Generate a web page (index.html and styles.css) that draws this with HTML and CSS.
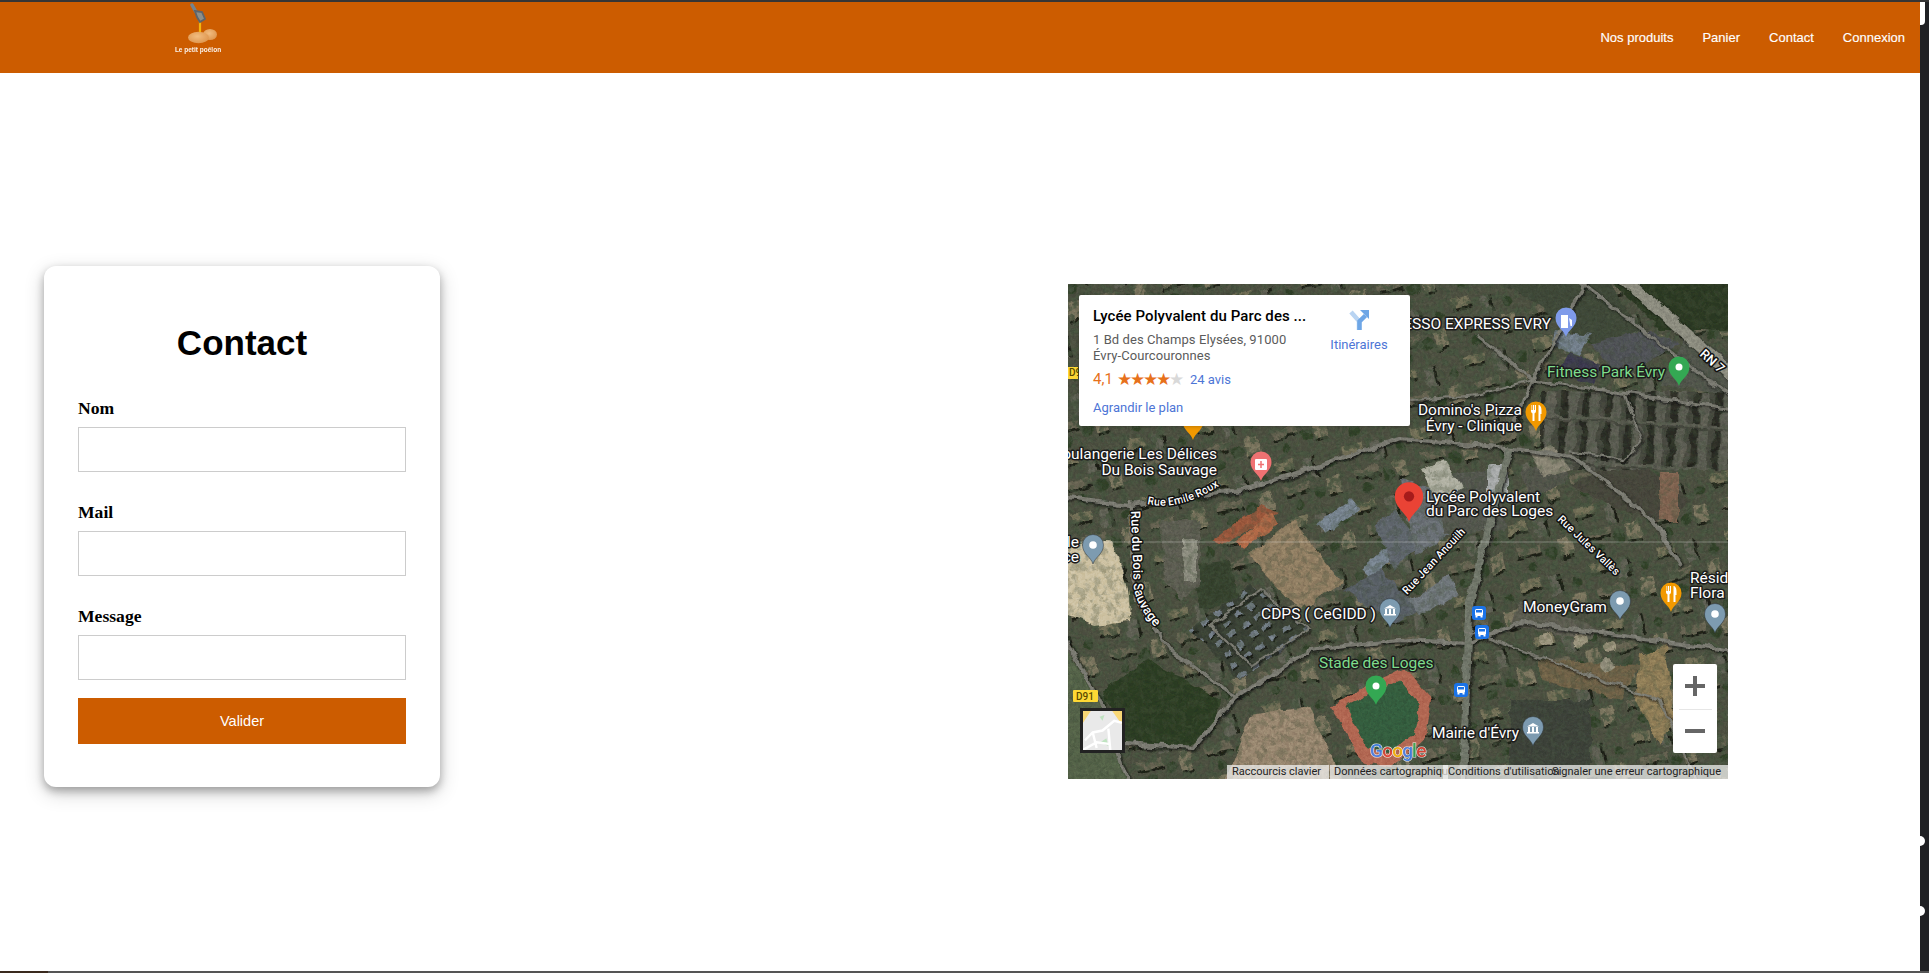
FILE: index.html
```html
<!DOCTYPE html>
<html lang="fr">
<head>
<meta charset="utf-8">
<title>Contact - Le petit poêlon</title>
<link rel="stylesheet" href="styles.css">
</head>
<body>
<div class="shell">
  <div class="page">
    <header class="nav">
      <a class="logo" href="#">
        <svg class="logo-art" viewBox="0 0 60 42" aria-hidden="true">
          <defs>
            <radialGradient id="spud" cx=".45" cy=".4" r=".7">
              <stop offset="0" stop-color="#f2bd80"/>
              <stop offset="1" stop-color="#dc9148"/>
            </radialGradient>
          </defs>
          <ellipse cx="42" cy="32.500" rx="7" ry="5.500" fill="url(#spud)"/>
          <ellipse cx="30.500" cy="35.500" rx="10.500" ry="5.800" fill="url(#spud)"/>
          <path d="M32 18 L32 30" stroke="#f5b50f" stroke-width="2.200" fill="none"/>
          <path d="M24 3 L28 10" stroke="#74838f" stroke-width="3.500" stroke-linecap="round"/>
          <path d="M27 9 L34 10 L37 17 L32 20 L29 15 Z" fill="#8d8f8a" stroke="#5e6469" stroke-width="1.800"/>
        </svg>
        <span class="logo-name">Le petit poêlon</span>
      </a>
      <nav class="nav-links">
        <a href="#">Nos produits</a>
        <a href="#">Panier</a>
        <a href="#">Contact</a>
        <a href="#">Connexion</a>
      </nav>
    </header>

    <main class="content">
      <form class="card">
        <h1>Contact</h1>
        <label class="field"><b>Nom</b><input type="text"></label>
        <label class="field"><b>Mail</b><input type="text"></label>
        <label class="field"><b>Message</b><input type="text"></label>
        <button type="button">Valider</button>
      </form>

      <section class="map">
        <svg class="terrain" viewBox="1068 284 660 495" aria-hidden="true">
          <defs>
            <filter id="noise" x="0" y="0" width="100%" height="100%">
              <feTurbulence type="fractalNoise" baseFrequency=".35" numOctaves="3" seed="8"/>
              <feColorMatrix values="0 0 0 0 .5  0 0 0 0 .5  0 0 0 0 .5  1.600 0 0 0 -.35"/>
            </filter>
            <filter id="grain" x="0" y="0" width="100%" height="100%">
              <feTurbulence type="fractalNoise" baseFrequency=".14" numOctaves="3" seed="3"/>
              <feColorMatrix values="0 0 0 0 .05  0 0 0 0 .07  0 0 0 0 .04  0 0 0 5 -2.200"/>
            </filter>
            <filter id="soft" x="0" y="0" width="100%" height="100%">
              <feTurbulence type="fractalNoise" baseFrequency=".07" numOctaves="3" seed="5" result="warp"/>
              <feDisplacementMap in="SourceGraphic" in2="warp" scale="8" xChannelSelector="R" yChannelSelector="G"/>
              <feGaussianBlur stdDeviation=".65"/>
            </filter>
            <filter id="edge" x="-5%" y="-5%" width="110%" height="110%">
              <feDropShadow dx="1.500" dy="1.500" stdDeviation=".8" flood-color="#0c0e09" flood-opacity=".9"/>
            </filter>
            <pattern id="suburb" width="70" height="58" patternUnits="userSpaceOnUse" patternTransform="rotate(-14)">
              <rect width="70" height="58" fill="#45483a"/>
              <rect x="4" y="4" width="20" height="10" fill="#68654f"/>
              <rect x="4" y="14" width="20" height="3" fill="#1b1d15"/>
              <rect x="32" y="6" width="10" height="20" fill="#56574c"/>
              <rect x="42" y="6" width="3" height="20" fill="#1b1d15"/>
              <rect x="50" y="30" width="14" height="18" fill="#6e6955"/>
              <rect x="50" y="48" width="14" height="3" fill="#1b1d15"/>
              <rect x="8" y="30" width="26" height="8" fill="#5d5a4a"/>
              <rect x="8" y="38" width="26" height="3" fill="#1b1d15"/>
              <circle cx="42" cy="42" r="6" fill="#2b3a24"/>
              <circle cx="60" cy="18" r="5" fill="#2b3a24"/>
              <circle cx="20" cy="50" r="5" fill="#2b3a24"/>
            </pattern>
            <pattern id="rows" width="22" height="44" patternUnits="userSpaceOnUse" patternTransform="rotate(4)">
              <rect width="22" height="44" fill="#3d3e37"/>
              <rect x="1" y="2" width="7" height="40" fill="#1f201b"/>
              <rect x="9" y="2" width="9" height="40" fill="#56564e"/>
              <rect x="0" y="41" width="22" height="3" fill="#55564d"/>
            </pattern>
            <pattern id="houses" width="16" height="13" patternUnits="userSpaceOnUse" patternTransform="rotate(-35)">
              <rect width="16" height="13" fill="#33392f"/>
              <rect x="2" y="2" width="8" height="5" fill="#68717a"/>
              <rect x="3" y="7" width="8" height="2" fill="#171a14"/>
            </pattern>
            <path id="pin" d="M0 0C-2-7-10.500-10-10.500-19A10.500 10.500 0 1 1 10.500-19C10.500-10 2-7 0 0Z"/>
            <g id="bus">
              <rect x="-7" y="-7" width="14" height="14" rx="3" fill="#1a73e8"/>
              <rect x="-4" y="-4" width="8" height="7" rx="1.500" fill="#fff"/>
              <rect x="-3" y="-3" width="6" height="2.500" fill="#1a73e8"/>
              <rect x="-3.500" y="3" width="2" height="1.500" fill="#fff"/>
              <rect x="1.500" y="3" width="2" height="1.500" fill="#fff"/>
            </g>
            <g id="temple" fill="#fff">
              <path d="M-6-19.500L0-23L6-19.500Z"/>
              <rect x="-5" y="-19" width="2" height="5"/>
              <rect x="-1" y="-19" width="2" height="5"/>
              <rect x="3" y="-19" width="2" height="5"/>
              <rect x="-6" y="-14" width="12" height="1.500"/>
            </g>
            <g id="fork" fill="#fff">
              <path d="M-5-26v6c0 1.500 1 2 1.500 2.500V-10h2v-7.500c.5-.5 1.500-1 1.500-2.500v-6h-1v5h-.8v-5h-1.400v5H-4.500v-5Z"/>
              <path d="M2.500-26c2 0 3 2.500 3 6v3h-1v7h-2Z"/>
            </g>
            <path id="roadJean" d="M1407 595L1466 532"/>
            <path id="roadJules" d="M1557 520L1620 580"/>
            <path id="roadEmile" d="M1147 504Q1180 512 1222 484"/>
            <path id="roadBois" d="M1131 511L1134 590Q1140 615 1168 640"/>
          </defs>

          <g filter="url(#soft)">
            <rect x="1048" y="264" width="700" height="535" fill="url(#suburb)"/>
            <rect x="1048" y="264" width="700" height="535" filter="url(#grain)" opacity=".7"/>

            <!-- ground patches -->
            <path d="M1060 548L1110 540Q1135 590 1128 622L1095 626L1060 612Z" fill="#c8bb98"/>
            <path d="M1247 555L1293 520L1343 583L1300 610Z" fill="#85735a"/>
            <path d="M1222 790L1250 715L1310 705L1345 790Z" fill="#8e7b66"/>
            <path d="M1103 690L1150 660L1220 700L1215 730L1190 745L1125 745Z" fill="#27361f"/>
            <path d="M1640 655L1665 645L1675 720L1660 745L1635 700Z" fill="#857350"/>
            <path d="M1540 660L1640 665L1620 700L1540 680Z" fill="#665941"/>
            <path d="M1510 700L1590 700L1590 770L1510 770Z" fill="#363b33"/>
            <path d="M1060 640L1100 700L1130 790L1060 790Z" fill="#4d5a42"/>
            <path d="M1480 270L1600 270L1640 330L1600 350L1530 300Z" fill="#384032"/>
            <path d="M1600 270L1740 270L1740 330L1660 330Z" fill="#27331f"/>
            <path d="M1190 565L1230 560L1240 600L1200 610Z" fill="#2f3a28"/>

            <!-- built areas -->
            <rect x="1540" y="392" width="200" height="78" fill="url(#rows)" opacity=".85"/>
            <path d="M1190 630L1250 585L1310 630L1240 680Z" fill="url(#houses)"/>
            <path d="M1160 520L1200 520L1200 585L1180 600L1165 580Z" fill="#55554b"/>
            <path d="M1183 540h14v42h-14z" fill="#7e7e72"/>
            <path d="M1212 540L1262 505L1278 512L1222 545Z" fill="#8e4f36"/>
            <path d="M1236 540L1272 512L1278 525L1242 550Z" fill="#a85f40"/>
            <path d="M1316 524L1350 498L1360 510L1326 534Z" fill="#6c7782"/>
            <path d="M1362 568L1388 545L1398 555L1372 578Z" fill="#6c7782"/>
            <path d="M1376 525L1395 510L1420 545L1395 570Z" fill="#565c62"/>
            <path d="M1400 480L1440 490L1460 530L1415 555Z" fill="#60656a"/>
            <path d="M1345 590L1380 570L1420 610L1395 625Z" fill="#50565c"/>
            <path d="M1430 475L1500 470L1505 530L1445 535Z" fill="#4c4e47"/>
            <path d="M1420 470L1445 460L1462 488L1436 500Z" fill="#a8a898"/>
            <path d="M1488 465h20v28h-20z" fill="#9da0a0"/>
            <path d="M1520 470L1560 462L1570 480L1530 500Z" fill="#4b4c44"/>
            <path d="M1570 485L1620 510L1660 520L1690 500L1650 470L1600 470Z" fill="#3f3e35"/>
            <rect x="1660" y="472" width="18" height="48" fill="#745a49"/>
            <path d="M1520 600L1600 630L1590 640L1510 625Z" fill="#55544a"/>
            <path d="M1408 600L1450 575L1460 595L1420 615Z" fill="#666c70"/>
            <circle cx="1546" cy="640" r="7" fill="#928a74"/><circle cx="1580" cy="640" r="7" fill="#928a74"/>
            <circle cx="1610" cy="646" r="6" fill="#928a74"/><circle cx="1607" cy="665" r="7" fill="#84806f"/>
            <path d="M1530 452L1552 445L1570 470L1545 478Z" fill="#7c7869"/>
            <path d="M1555 330L1590 335L1580 355L1550 345Z" fill="#68737e"/>
            <path d="M1590 345L1650 330L1680 345L1620 375Z" fill="#484a4e"/>
            <path d="M1570 352L1600 365L1595 385L1560 370Z" fill="#353346"/>
            <path d="M1690 330L1740 370L1740 395L1660 385Z" fill="#4a4d45"/>

            <rect x="1048" y="264" width="700" height="535" filter="url(#grain)" opacity=".3"/>

            <!-- stadium -->
            <path d="M1330 705L1405 668L1432 700L1425 738L1390 768L1362 762Z" fill="#a85d4a"/>
            <path d="M1345 706L1400 680L1420 705L1415 735L1385 755L1368 748Z" fill="#2f5438"/>

            <!-- roads -->
            <g class="roads" filter="url(#edge)">
              <path class="r4" d="M1125 743L1193 748L1237 697L1310 650L1400 640L1470 643L1520 622L1740 652"/>
              <path class="r4" d="M1060 496L1130 505L1240 490L1300 472L1400 438L1507 448L1573 457L1653 520L1680 565"/>
              <path class="r6" d="M1510 448L1490 520L1470 600L1462 790"/>
              <path class="r3" d="M1477 337L1533 380L1740 410"/>
              <path class="r3" d="M1590 275L1533 380L1515 420"/>
              <path class="r3" d="M1130 500L1135 600L1170 650L1237 697"/>
              <path class="r4" d="M1060 630L1100 700L1130 790"/>
              <path class="r2" d="M1410 400L1480 395L1533 380"/>
              <path class="r2" d="M1465 630L1660 700L1700 790"/>
              <path class="r2" d="M1210 625L1260 590L1310 630L1250 665Z"/>
              <path class="r2" d="M1625 395L1640 440L1625 460L1570 450"/>
              <path class="r8" d="M1620 275L1740 382"/>
              <path class="r3" d="M1580 282L1740 404"/>
            </g>
            <rect class="overlay" x="1048" y="264" width="700" height="535" filter="url(#noise)" opacity=".5"/>
          </g>
          <line x1="1068" y1="542" x2="1728" y2="542" stroke="#fff" stroke-opacity=".3"/>

          <!-- road names -->
          <text class="road-name"><textPath href="#roadEmile">Rue Emile Roux</textPath></text>
          <text class="road-name big"><textPath href="#roadBois">Rue du Bois Sauvage</textPath></text>
          <text class="road-name"><textPath href="#roadJean">Rue Jean Anouilh</textPath></text>
          <text class="road-name"><textPath href="#roadJules">Rue Jules Vallès</textPath></text>
          <text class="road-name big" transform="translate(1699 355) rotate(42)" x="0" y="0">RN 7</text>

          <!-- places -->
          <text class="place end" x="1551" y="329">ESSO EXPRESS EVRY</text>
          <text class="place green end" x="1665" y="377">Fitness Park Évry</text>
          <text class="place end" x="1522" y="415">Domino's Pizza</text>
          <text class="place end" x="1522" y="431">Évry - Clinique</text>
          <text class="place" x="1426" y="502">Lycée Polyvalent</text>
          <text class="place" x="1426" y="516">du Parc des Loges</text>
          <text class="place end" x="1217" y="459">oulangerie Les Délices</text>
          <text class="place end" x="1217" y="475">Du Bois Sauvage</text>
          <text class="place end" x="1079" y="547">le</text>
          <text class="place end" x="1079" y="562">ce</text>
          <text class="place end" x="1376" y="619">CDPS ( CeGIDD )</text>
          <text class="place green" x="1319" y="668">Stade des Loges</text>
          <text class="place" x="1523" y="612">MoneyGram</text>
          <text class="place" x="1690" y="583">Résid</text>
          <text class="place" x="1690" y="598">Flora</text>
          <text class="place end" x="1519" y="738">Mairie d'Évry</text>

          <!-- pins -->
          <use href="#pin" class="pin-fuel" x="1566" y="337"/>
          <path d="M1561 315h7v13h-7zM1569 318l3 2v6h-1.500" fill="#fff"/>
          <use href="#pin" class="pin-green" x="1679" y="386"/>
          <circle cx="1679" cy="367" r="3.500" fill="#fff"/>
          <use href="#pin" class="pin-orange" x="1536" y="431"/>
          <use href="#fork" x="1536" y="431"/>
          <use href="#pin" class="pin-orange" x="1193" y="440"/>
          <use href="#pin" class="pin-orange" x="1671" y="612"/>
          <use href="#fork" x="1671" y="612"/>
          <use href="#pin" class="pin-rose" x="1261" y="481"/>
          <rect x="1255" y="459" width="12" height="11" rx="1" fill="#fff"/>
          <path d="M1261 461v7M1258 464.500h6" stroke="#ef7272" stroke-width="1.500"/>
          <use href="#pin" class="pin-gray" x="1093" y="564"/>
          <circle cx="1093" cy="545" r="3.800" fill="#fff"/>
          <use href="#pin" class="pin-gray" x="1390" y="628"/>
          <use href="#temple" x="1390" y="628"/>
          <use href="#pin" class="pin-green" x="1376" y="705"/>
          <circle cx="1376" cy="686" r="3.500" fill="#fff"/>
          <use href="#pin" class="pin-gray" x="1620" y="620"/>
          <circle cx="1620" cy="601" r="3.800" fill="#fff"/>
          <use href="#pin" class="pin-gray" x="1715" y="633"/>
          <circle cx="1715" cy="614" r="3.800" fill="#fff"/>
          <use href="#pin" class="pin-gray" x="1533" y="746"/>
          <use href="#temple" x="1533" y="746"/>
          <g transform="translate(1409 522) scale(1.350)">
            <use href="#pin" class="pin-red"/>
            <circle cy="-19" r="3.800" fill="#a61b1b"/>
          </g>
          <use href="#bus" x="1479" y="613"/>
          <use href="#bus" x="1482" y="632"/>
          <use href="#bus" x="1461" y="690"/>

          <!-- shields -->
          <rect x="1064" y="367" width="14" height="12" fill="#fdd835"/>
          <text class="shield" x="1069" y="376">D9</text>
          <rect x="1073" y="690" width="25" height="12" rx="1" fill="#fdd835"/>
          <text class="shield" x="1076" y="700">D91</text>

          <!-- google mark -->
          <text class="google" x="1370" y="757"><tspan fill="#4285f4">G</tspan><tspan fill="#ea4335">o</tspan><tspan fill="#fbbc05">o</tspan><tspan fill="#4285f4">g</tspan><tspan fill="#34a853">l</tspan><tspan fill="#ea4335">e</tspan></text>
        </svg>

        <div class="info">
          <div class="info-main">
            <div class="info-title">Lycée Polyvalent du Parc des ...</div>
            <div class="info-addr">1 Bd des Champs Elysées, 91000<br>Évry-Courcouronnes</div>
            <div class="info-rating">
              <span class="score">4,1</span>
              <span class="stars">★★★★<i>★</i></span>
              <a href="#">24 avis</a>
            </div>
            <a class="info-more" href="#">Agrandir le plan</a>
          </div>
          <a class="info-dir" href="#">
            <svg viewBox="0 0 20 20" aria-hidden="true">
              <path d="M10 20V11L2 2" fill="none" stroke="#b9d4f2" stroke-width="4.500"/>
              <path d="M10.500 20V11.500L16.500 5.500" fill="none" stroke="#6ea6e6" stroke-width="4.500"/>
              <path d="M11 0H20V9Z" fill="#6ea6e6"/>
            </svg>
            <span>Itinéraires</span>
          </a>
        </div>

        <div class="thumb">
          <svg viewBox="0 0 40 40" aria-hidden="true">
            <rect width="40" height="40" fill="#e9e9e9"/>
            <path d="M0 12L8 0H0ZM30 0L40 14V0Z" fill="#f8d775"/>
            <path d="M17 6L22 4L20 10Z" fill="#bfe3c0"/>
            <path d="M18 32L24 28L26 36Z" fill="#bfe3c0"/>
            <path class="thumb-road" d="M2 30L10 22L20 20L32 10L40 12M10 22L14 38M26 18L28 40M0 40L14 32L28 34"/>
          </svg>
        </div>

        <div class="zoom">
          <span class="zoom-btn">
            <svg viewBox="0 0 20 20" aria-hidden="true"><path d="M0 8h8V0h4v8h8v4h-8v8H8v-8H0Z"/></svg>
          </span>
          <span class="zoom-btn">
            <svg viewBox="0 0 20 20" aria-hidden="true"><path d="M0 8h20v4H0Z"/></svg>
          </span>
        </div>

        <div class="credits">
          <span class="credit-keys">Raccourcis clavier</span>
          <span class="credit-data">Données cartographiques</span>
          <span class="credit-report">Signaler une erreur cartographique</span>
          <span class="credit-terms">Conditions d'utilisation</span>
        </div>
      </section>
    </main>
  </div>
  <aside class="edge"></aside>
</div>
<div class="taskbar"></div>
</body>
</html>
```

FILE: styles.css
```css
* { box-sizing: border-box; }

html, body {
  margin: 0;
  height: 973px;
  overflow: hidden;
  background: #fff;
}

body {
  display: flex;
  flex-direction: column;
  border-top: 2px solid #353535;
  font-family: "Liberation Sans", Arial, sans-serif;
}

.shell {
  flex: 1;
  min-height: 0;
  display: flex;
  position: relative;
}

.page {
  flex: 1;
  min-width: 0;
}

.edge {
  width: 9px;
  background: #202124;
  position: relative;
}

.edge::before {
  content: "";
  position: absolute;
  left: 0;
  top: 0;
  width: 5px;
  height: 23px;
  background: #fff;
  border-bottom-right-radius: 4px;
}

.edge::after {
  content: "";
  position: absolute;
  left: -5px;
  top: 834px;
  width: 10px;
  height: 10px;
  border-radius: 50%;
  background: #fff;
  box-shadow: 0 70px 0 #fff;
}

.taskbar {
  height: 2px;
  background: linear-gradient(90deg, #3a2a1e 48px, #555 48px);
}

/* top bar */
.nav {
  height: 71px;
  background: #cc5c00;
  display: flex;
  align-items: flex-start;
  justify-content: space-between;
  padding: 0 15px 0 175px;
}

.logo {
  width: 46px;
  display: flex;
  flex-direction: column;
  align-items: center;
  color: #fff;
  text-decoration: none;
}

.logo-art {
  width: 60px;
  height: 42px;
  flex: none;
  filter: blur(.5px);
}

.logo-name {
  font-size: 6.500px;
  font-weight: 700;
  line-height: 9px;
  white-space: nowrap;
  margin-top: 1px;
  opacity: .92;
  filter: blur(.3px);
}

.nav-links {
  display: flex;
  gap: 29px;
  padding-top: 28px;
}

.nav-links a {
  color: #fff;
  text-decoration: none;
  font-size: 13px;
  line-height: 16px;
  -webkit-text-stroke: .15px #fff;
}

/* main area */
.content {
  display: flex;
  align-items: flex-start;
  gap: 628px;
  padding: 193px 0 0 44px;
}

.card {
  width: 396px;
  height: 521px;
  flex: none;
  display: flex;
  flex-direction: column;
  padding: 0 34px;
  background: #fff;
  border-radius: 12px;
  box-shadow: 0 4px 8px rgba(0, 0, 0, .28), 0 6px 20px rgba(0, 0, 0, .19);
}

.card h1 {
  margin: 57px 0 35px;
  font-size: 35px;
  line-height: 40px;
  font-weight: 700;
  text-align: center;
}

.field {
  display: flex;
  flex-direction: column;
  gap: 9px;
  font-family: "Liberation Serif", "Times New Roman", serif;
  font-size: 17.600px;
  line-height: 20px;
  margin-bottom: 30px;
}

.field input {
  width: 100%;
  height: 45px;
  padding: 0 10px;
  border: 1px solid #ccc;
  background: #fff;
  border-radius: 0;
  outline: none;
}

.field:nth-of-type(3) {
  margin-bottom: 18px;
}

.card button {
  height: 46px;
  border: 0;
  background: #cc5c00;
  color: #fff;
  font-family: "Liberation Sans", Arial, sans-serif;
  font-size: 14.500px;
  padding: 0;
}

/* map */
.map {
  position: relative;
  width: 660px;
  height: 495px;
  flex: none;
  margin-top: 18px;
  overflow: hidden;
  font-family: Roboto, Arial, sans-serif;
  background: #4d5142;
}

.terrain {
  display: block;
  width: 660px;
  height: 495px;
}

.overlay { mix-blend-mode: overlay; }

.roads path { fill: none; stroke: #6e6e66; stroke-linejoin: round; }
.roads .r2 { stroke-width: 2px; }
.roads .r3 { stroke-width: 3px; }
.roads .r4 { stroke-width: 4px; }
.roads .r6 { stroke-width: 7px; stroke: #656a5e; }
.roads .r8 { stroke-width: 12px; stroke: #7f7f73; }

.place {
  font-family: Roboto, Arial, sans-serif;
  font-size: 15.500px;
  fill: #fff;
  stroke: #1b1b1b;
  stroke-width: 3px;
  paint-order: stroke;
  stroke-linejoin: round;
}

.place.end { text-anchor: end; }
.place.green { fill: #7fdc8c; }

.road-name {
  font-family: Roboto, Arial, sans-serif;
  font-size: 11px;
  font-weight: 500;
  fill: #fff;
  stroke: #111;
  stroke-width: 3px;
  paint-order: stroke;
  stroke-linejoin: round;
}

.road-name.big { font-size: 13px; }

.shield {
  font-family: Roboto, Arial, sans-serif;
  font-size: 10px;
  font-weight: 500;
  fill: #5b4a00;
}

.google {
  font-family: Roboto, Arial, sans-serif;
  font-size: 19px;
  font-weight: 500;
  letter-spacing: -.8px;
  stroke: #fff;
  stroke-width: 1.200px;
  paint-order: stroke;
  opacity: .85;
}

.pin-gray { fill: #7d9bb0; stroke: #2c3338; stroke-width: .5px; }
.pin-green { fill: #34a853; }
.pin-orange { fill: #f29900; }
.pin-fuel { fill: #7f9bea; }
.pin-rose { fill: #ef7272; }
.pin-red { fill: #ea4335; }

.info {
  position: absolute;
  left: 11px;
  top: 11px;
  width: 331px;
  height: 131px;
  display: flex;
  gap: 16px;
  padding: 13px 15px 10px 14px;
  background: #fff;
  border-radius: 2px;
  box-shadow: 0 1px 4px -1px rgba(0, 0, 0, .3);
}

.info-main {
  width: 214px;
  flex: none;
}

.info-title {
  font-size: 15px;
  font-weight: 500;
  line-height: 16px;
  color: #000;
  white-space: nowrap;
  letter-spacing: .08px;
}

.info-addr {
  margin-top: 8px;
  font-size: 13px;
  line-height: 16px;
  color: #5b5b5b;
  white-space: nowrap;
  letter-spacing: .08px;
}

.info-rating {
  margin-top: 7px;
  display: flex;
  align-items: center;
  height: 16px;
  font-size: 13px;
}

.score {
  font-size: 15px;
  color: #e7711b;
  width: 24px;
}

.stars {
  font-family: "DejaVu Sans", sans-serif;
  font-size: 17px;
  letter-spacing: -2.250px;
  line-height: 16px;
  color: #e7711b;
  width: 73px;
}

.stars i {
  font-style: normal;
  color: #d9d9d9;
}

.info a {
  color: #4d75d6;
  text-decoration: none;
}

.info-more {
  display: block;
  margin-top: 13px;
  font-size: 13px;
  line-height: 16px;
}

.info-dir {
  width: 72px;
  flex: none;
  display: flex;
  flex-direction: column;
  align-items: center;
  padding-top: 2px;
  gap: 7px;
  font-size: 13px;
  line-height: 16px;
  white-space: nowrap;
}

.info-dir svg {
  width: 20px;
  height: 20px;
  display: block;
}

.thumb {
  position: absolute;
  left: 12px;
  top: 424px;
  width: 45px;
  height: 45px;
  border: 3px solid #222;
  background: #e9e9e9;
}

.thumb svg {
  display: block;
  width: 100%;
  height: 100%;
}

.thumb-road { fill: none; stroke: #fff; stroke-width: 2.500px; }

.zoom {
  position: absolute;
  left: 605px;
  top: 380px;
  width: 44px;
  height: 89px;
  display: flex;
  flex-direction: column;
  background: #fff;
  border-radius: 2px;
}

.zoom-btn {
  flex: 1;
  display: flex;
  align-items: center;
  justify-content: center;
}

.zoom-btn + .zoom-btn {
  position: relative;
}

.zoom-btn + .zoom-btn::before {
  content: "";
  position: absolute;
  left: 6px;
  right: 5px;
  top: 0;
  height: 1px;
  background: #e6e6e6;
}

.zoom-btn svg {
  width: 20px;
  height: 20px;
  fill: #666;
}

.credits {
  position: absolute;
  left: 159px;
  right: 0;
  bottom: 0;
  height: 14px;
  font-size: 11px;
  line-height: 14px;
  color: #222;
}

.credits span {
  position: absolute;
  top: 0;
  height: 14px;
  white-space: nowrap;
  background: rgba(245, 245, 245, .72);
}

.credit-keys { left: 0; width: 102px; padding-left: 5px; }
.credit-data { left: 103px; width: 118px; padding-left: 4px; overflow: hidden; }
.credit-report { right: 0; padding: 0 7px 0 5px; }
.credit-terms { left: 216px; width: 104px; padding-left: 5px; background: rgba(245, 245, 245, .8); }
```
